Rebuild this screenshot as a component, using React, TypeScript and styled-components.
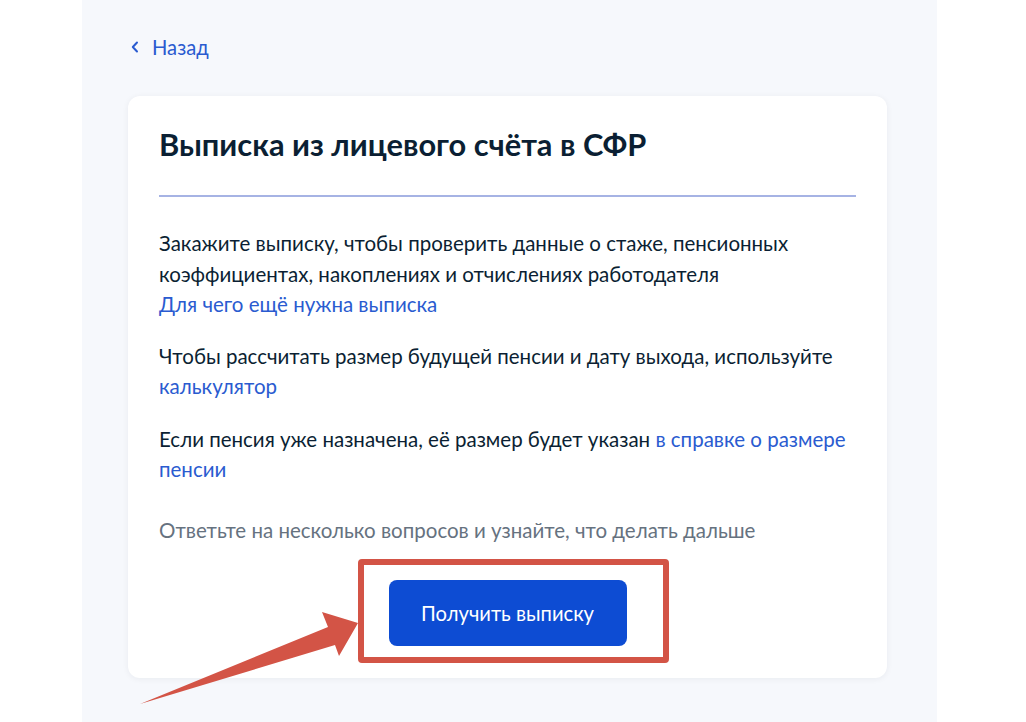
import React from "react";
import styled, { createGlobalStyle } from "styled-components";

const GlobalStyle = createGlobalStyle`
  html, body {
    margin: 0;
    padding: 0;
    background: #ffffff;
  }
  body {
    font-family: Lato, "Noto Sans", "Liberation Sans", sans-serif;
    color: #0b1f33;
    -webkit-font-smoothing: antialiased;
  }
  * { box-sizing: border-box; }
`;

const Page = styled.div`
  position: relative;
  width: 1026px;
  height: 722px;
  overflow: hidden;
  display: flex;
  padding-left: 82px;
`;

const Panel = styled.main`
  width: 855px;
  height: 100%;
  background: #f6f8fc;
  padding: 35px 50px 0 46px;
  display: flex;
  flex-direction: column;
`;

const BackLink = styled.a`
  display: inline-flex;
  align-items: center;
  gap: 13px;
  align-self: flex-start;
  margin-left: 3px;
  color: #2a5bd0;
  font-size: 20.2px;
  line-height: 24px;
  text-decoration: none;
  cursor: pointer;
`;

const Card = styled.section`
  margin-top: 37px;
  background: #ffffff;
  border-radius: 12px;
  box-shadow: 0 1px 6px rgba(11, 31, 51, 0.06);
  padding: 31px 31px 32px 31px;
  display: flex;
  flex-direction: column;
`;

const Title = styled.h1`
  margin: 0;
  font-size: 30.8px;
  line-height: 36px;
  font-weight: 700;
  color: #0b1f33;
`;

const Divider = styled.hr`
  margin: 32px 0 31px;
  border: 0;
  height: 2px;
  background: #a6b3e4;
`;

const Text = styled.p<{ $muted?: boolean; $gap?: number }>`
  margin: 0 0 ${(p) => p.$gap ?? 21}px;
  font-size: 20.5px;
  line-height: 30.5px;
  color: ${(p) => (p.$muted ? "#66727f" : "#0b1f33")};
`;

const Link = styled.a`
  color: #2a5bd0;
  text-decoration: none;
  cursor: pointer;
`;

const Actions = styled.div`
  display: flex;
  justify-content: center;
  margin-top: 35px;
`;

const PrimaryButton = styled.button`
  width: 238px;
  height: 66px;
  border: 0;
  border-radius: 8px;
  background: #0d4cd3;
  color: #ffffff;
  font-family: inherit;
  font-size: 20.2px;
  cursor: pointer;
`;

const Highlight = styled.div`
  position: absolute;
  left: 358px;
  top: 559px;
  width: 311px;
  height: 104px;
  border: 6.5px solid #d35446;
  border-radius: 4px;
  pointer-events: none;
`;

const Pointer = styled.svg`
  position: absolute;
  left: 136px;
  top: 606px;
  pointer-events: none;
`;

const ChevronLeft = () => (
  <svg width="8" height="12" viewBox="0 0 8 12" fill="none">
    <path d="M6 1.5L1.8 6L6 10.5" stroke="#2a5bd0" strokeWidth="2" strokeLinecap="round" strokeLinejoin="round" />
  </svg>
);

export default function App() {
  return (
    <>
      <GlobalStyle />
      <Page>
        <Panel>
          <BackLink>
            <ChevronLeft />
            Назад
          </BackLink>
          <Card>
            <Title>Выписка из лицевого счёта в СФР</Title>
            <Divider />
            <Text>
              Закажите выписку, чтобы проверить данные о стаже, пенсионных
              коэффициентах, накоплениях и отчислениях работодателя
              <br />
              <Link>Для чего ещё нужна выписка</Link>
            </Text>
            <Text $gap={22}>
              Чтобы рассчитать размер будущей пенсии и дату выхода, используйте{" "}
              <Link>калькулятор</Link>
            </Text>
            <Text $gap={30}>
              Если пенсия уже назначена, её размер будет указан{" "}
              <Link>в справке о размере пенсии</Link>
            </Text>
            <Text $muted $gap={0}>
              Ответьте на несколько вопросов и узнайте, что делать дальше
            </Text>
            <Actions>
              <PrimaryButton>Получить выписку</PrimaryButton>
            </Actions>
          </Card>
        </Panel>
        <Highlight />
        <Pointer width="230" height="104" viewBox="136 606 230 104">
          <polygon
            points="140,704 328,627 322,612 358,623 339,656 335,645"
            fill="#d35446"
          />
        </Pointer>
      </Page>
    </>
  );
}
